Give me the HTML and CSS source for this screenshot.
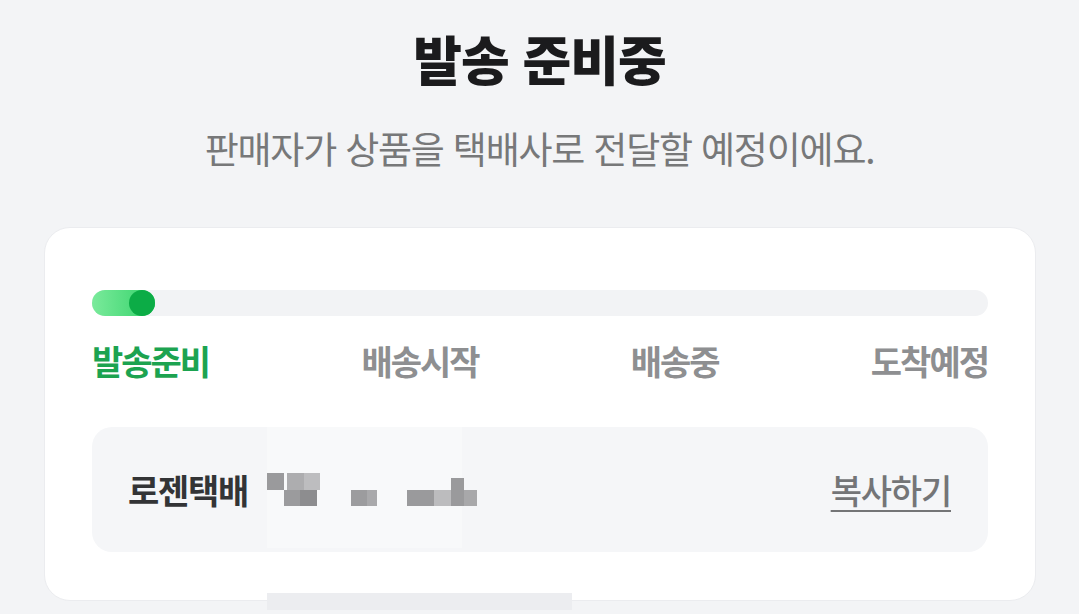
FILE: index.html
```html
<!DOCTYPE html>
<html lang="ko">
<head>
  <meta charset="UTF-8" />
  <meta name="viewport" content="width=device-width, initial-scale=1.0"/>
  <title>발송 준비중</title>
  <link rel="stylesheet" href="styles.css">
</head>
<body>

  <header class="status-head">
    <h1>발송 준비중</h1>
    <p>판매자가 상품을 택배사로 전달할 예정이에요.</p>
  </header>

  <section class="card">
    <div class="track">
      <div class="track-fill" style="width: 63px;">
        <span class="knob"></span>
      </div>
    </div>
    <div class="steps">
      <span class="step active">발송준비</span>
      <span class="step">배송시작</span>
      <span class="step">배송중</span>
      <span class="step">도착예정</span>
    </div>

    <div class="invoice">
      <span class="courier">로젠택배</span>
      <!-- tracking number is masked -->
      <svg class="masked" width="212" height="34" viewBox="0 0 212 34">
        <rect x="0" y="0" width="17" height="17" fill="#9a9a9c"/>
        <rect x="20" y="0" width="17" height="17" fill="#adadaf"/>
        <rect x="37" y="0" width="16" height="17" fill="#bdbdbf"/>
        <rect x="17" y="17" width="16" height="16" fill="#9b9b9d"/>
        <rect x="33" y="17" width="17" height="16" fill="#8d8d8f"/>
        <rect x="84" y="17" width="16" height="16" fill="#9c9c9e"/>
        <rect x="100" y="17" width="10" height="16" fill="#a9a9ab"/>
        <rect x="140" y="17" width="27" height="16" fill="#9a9a9c"/>
        <rect x="167" y="17" width="17" height="16" fill="#bcbcbe"/>
        <rect x="184" y="5" width="13" height="28" fill="#9a9a9c"/>
        <rect x="197" y="17" width="13" height="16" fill="#a8a8aa"/>
      </svg>
      <a class="copy" href="#">복사하기</a>
    </div>
  </section>

  <div class="mask mask-a"></div>
  <div class="mask mask-b"></div>

</body>
</html>
```

FILE: styles.css
```css
body {
  margin: 0;
  font-family: "Noto Sans CJK KR", "Noto Sans", sans-serif;
  background: #f3f4f6;
  color: #1c1c1e;
  position: relative;
  height: 614px;
  overflow: hidden;
}
.status-head {
  text-align: center;
  padding-top: 22px;
}
.status-head h1 {
  margin: 0;
  font-size: 53px;
  line-height: 72px;
  font-weight: 900;
  letter-spacing: -1px;
  color: #1b1b1d;
}
.status-head p {
  margin: 30px 0 0;
  font-size: 37px;
  line-height: 48px;
  font-weight: 400;
  letter-spacing: -1.2px;
  color: #777879;
}
.card {
  margin: 55px 43px 0 44px;
  background: #fff;
  border: 1px solid #ebecef;
  border-radius: 26px;
  padding: 62px 47px 48px;
}
.track {
  height: 26px;
  background: #f2f3f5;
  border-radius: 13px;
}
.track-fill {
  height: 26px;
  border-radius: 13px;
  background: linear-gradient(to right, #7aea9b, #34d269);
  position: relative;
}
.knob {
  position: absolute;
  right: 0;
  top: 0;
  width: 26px;
  height: 26px;
  border-radius: 50%;
  background: #0cac46;
}
.steps {
  display: flex;
  justify-content: space-between;
  margin-top: 25px;
}
.step {
  font-size: 34px;
  line-height: 40px;
  font-weight: 700;
  letter-spacing: -2px;
  color: #8e8f91;
}
.step.active {
  color: #1ca350;
}
.invoice {
  margin-top: 46px;
  height: 125px;
  background: #f5f6f8;
  border-radius: 20px;
  padding: 0 37px 0 36px;
  display: flex;
  align-items: center;
}
.courier {
  font-size: 34px;
  font-weight: 700;
  letter-spacing: -1.3px;
  color: #333436;
}
.masked {
  margin-left: 19px;
  position: relative;
  z-index: 1;
}
.copy {
  margin-left: auto;
  font-size: 34px;
  font-weight: 500;
  letter-spacing: -1.2px;
  color: #747577;
  text-decoration: underline;
  text-underline-offset: 6px;
  text-decoration-thickness: 2px;
}
.mask {
  position: absolute;
}
.mask-a {
  left: 267px;
  top: 424px;
  width: 195px;
  height: 124px;
  background: rgba(255, 255, 255, 0.35);
}
.mask-b {
  left: 267px;
  top: 593px;
  width: 305px;
  height: 17px;
  background: #ecedf0;
}
```
